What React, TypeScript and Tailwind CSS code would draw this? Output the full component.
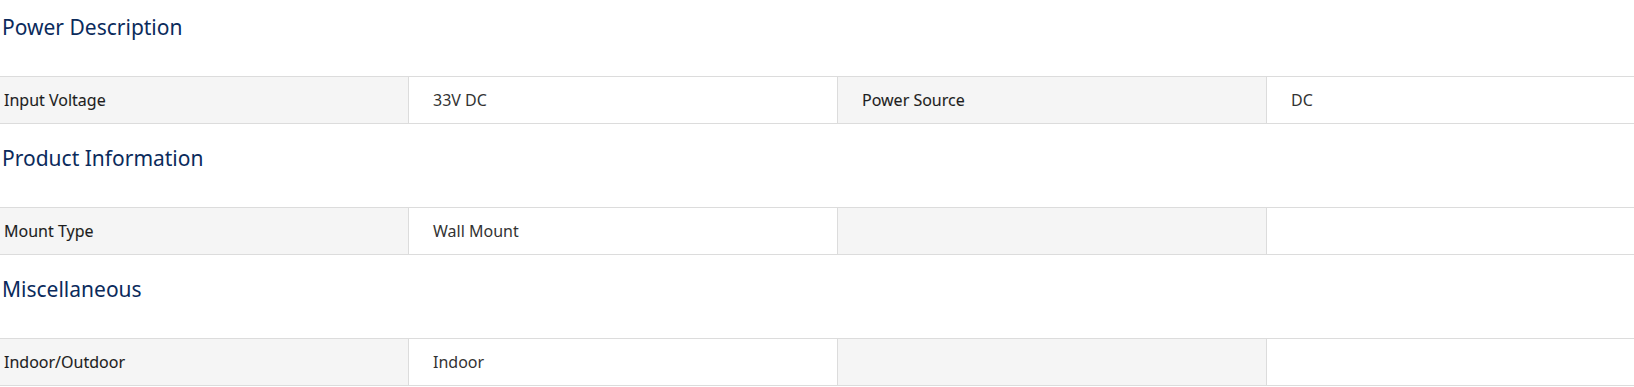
const sections = [
  {
    title: "Power Description",
    cells: ["Input Voltage", "33V DC", "Power Source", "DC"],
  },
  {
    title: "Product Information",
    cells: ["Mount Type", "Wall Mount", "", ""],
  },
  {
    title: "Miscellaneous",
    cells: ["Indoor/Outdoor", "Indoor", "", ""],
  },
];

// label cells are a touch heavier than values in the original (medium weight)
const label = "flex items-center bg-[#f5f5f5] text-[#1e1e1e] [-webkit-text-stroke:0.1px_#1e1e1e]";
const value = "flex items-center pl-6 border-l border-[#dcdcdc] text-[#333]";

function SpecRow({ cells }: { cells: string[] }) {
  return (
    <div className="grid grid-cols-[408px_429px_429px_1fr] h-[48px] border-y border-[#dcdcdc] text-[16px]">
      <div className={`${label} pl-1`}>{cells[0]}</div>
      <div className={value}>{cells[1]}</div>
      <div className={`${label} pl-6 border-l border-[#dcdcdc]`}>{cells[2]}</div>
      <div className={value}>{cells[3]}</div>
    </div>
  );
}

export default function App() {
  return (
    <div className="w-[1634px] h-[387px] overflow-hidden bg-white font-['Noto_Sans',sans-serif]">
      {sections.map((s, i) => (
        <section key={s.title}>
          <h2
            className={`${i === 0 ? "pt-[13px]" : "pt-[20px]"} pb-[35px] pl-[2px] text-[21px] leading-7 text-[#0b2b5c]`}
          >
            {s.title}
          </h2>
          <SpecRow cells={s.cells} />
        </section>
      ))}
    </div>
  );
}
